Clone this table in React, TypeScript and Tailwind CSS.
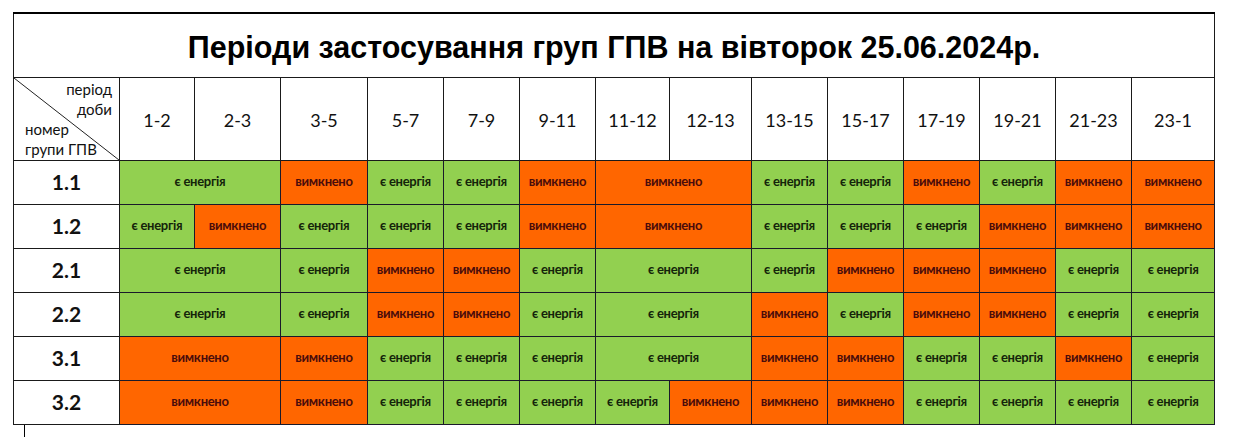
const periods = ['1-2', '2-3', '3-5', '5-7', '7-9', '9-11', '11-12', '12-13', '13-15', '15-17', '17-19', '19-21', '21-23', '23-1']

// g = є енергія, o = вимкнено; number = colspan
type Cell = [string, number]

const rows: { group: string; cells: Cell[] }[] = [
  {
    group: '1.1',
    cells: [['g', 2], ['o', 1], ['g', 1], ['g', 1], ['o', 1], ['o', 2], ['g', 1], ['g', 1], ['o', 1], ['g', 1], ['o', 1], ['o', 1]],
  },
  {
    group: '1.2',
    cells: [['g', 1], ['o', 1], ['g', 1], ['g', 1], ['g', 1], ['o', 1], ['o', 2], ['g', 1], ['g', 1], ['g', 1], ['o', 1], ['o', 1], ['o', 1]],
  },
  {
    group: '2.1',
    cells: [['g', 2], ['g', 1], ['o', 1], ['o', 1], ['g', 1], ['g', 2], ['g', 1], ['o', 1], ['o', 1], ['o', 1], ['g', 1], ['g', 1]],
  },
  {
    group: '2.2',
    cells: [['g', 2], ['g', 1], ['o', 1], ['o', 1], ['g', 1], ['g', 2], ['o', 1], ['g', 1], ['o', 1], ['o', 1], ['g', 1], ['g', 1]],
  },
  {
    group: '3.1',
    cells: [['o', 2], ['o', 1], ['g', 1], ['g', 1], ['g', 1], ['g', 2], ['o', 1], ['o', 1], ['g', 1], ['g', 1], ['o', 1], ['g', 1]],
  },
  {
    group: '3.2',
    cells: [['o', 2], ['o', 1], ['g', 1], ['g', 1], ['g', 1], ['g', 1], ['o', 1], ['o', 1], ['o', 1], ['g', 1], ['g', 1], ['g', 1], ['g', 1]],
  },
]

const widths = [106, 75, 86, 87, 76, 76, 76, 74, 82, 76, 76, 76, 76, 76, 83]

export default function App() {
  return (
    <div className="w-[1233px] h-[437px] bg-white overflow-hidden pt-3 pl-[13px]">
      <table className="table-fixed border-collapse w-[1201px] border-t-2 border-black font-['Lato',sans-serif]">
        <colgroup>
          {widths.map((w, i) => (
            <col key={i} style={{ width: w }} />
          ))}
        </colgroup>
        <tbody>
          {/* Title */}
          <tr className="h-[64px]">
            <td
              colSpan={15}
              className="border border-[#1a1a1a] text-center align-middle font-['Liberation_Sans',Arial,sans-serif] font-bold text-[30.5px] leading-none text-black pt-1"
            >
              Періоди застосування груп ГПВ на вівторок 25.06.2024р.
            </td>
          </tr>

          {/* Header */}
          <tr className="h-[83px]">
            <td className="relative border border-[#1a1a1a] p-0 align-top">
              <svg className="absolute inset-0 w-full h-full" preserveAspectRatio="none" viewBox="0 0 100 100">
                <line x1="0" y1="0" x2="100" y2="100" stroke="#222" strokeWidth="1" vectorEffect="non-scaling-stroke" />
              </svg>
              <div className="relative flex flex-col text-[15px] leading-[20px] text-[#111] pt-[1px]">
                <span className="text-right pr-[7px]">період</span>
                <span className="text-right pr-[7px]">доби</span>
                <span className="pl-[11px]">номер</span>
                <span className="pl-[11px]">групи ГПВ</span>
              </div>
            </td>
            {periods.map((p) => (
              <td key={p} className="border border-[#1a1a1a] text-center align-middle text-[18px] pt-1 text-[#111]">
                {p}
              </td>
            ))}
          </tr>

          {/* Groups */}
          {rows.map((row) => (
            <tr key={row.group} className="h-[44px]">
              <td className="border border-[#1a1a1a] text-center align-middle font-bold text-[21px] text-[#111]">
                {row.group}
              </td>
              {row.cells.map(([state, span], i) =>
                state === 'g' ? (
                  <td
                    key={i}
                    colSpan={span}
                    className="border border-[#1a1a2a] bg-[#92d050] text-center align-middle font-bold text-[13px] tracking-[-0.3px] text-[#14240a]"
                  >
                    є енергія
                  </td>
                ) : (
                  <td
                    key={i}
                    colSpan={span}
                    className="border border-[#1a1a2a] bg-[#ff6600] text-center align-middle font-bold text-[13px] tracking-[-0.3px] text-[#4a0c0c]"
                  >
                    вимкнено
                  </td>
                )
              )}
            </tr>
          ))}
        </tbody>
      </table>
      <div className="ml-[11px] w-px h-[20px] bg-black" />
    </div>
  )
}
